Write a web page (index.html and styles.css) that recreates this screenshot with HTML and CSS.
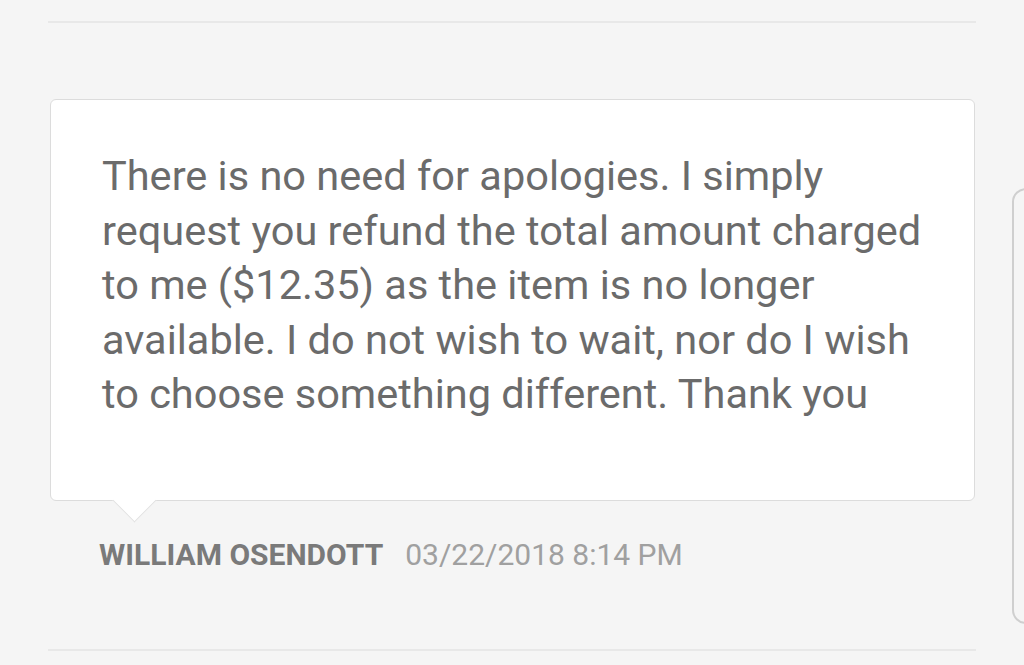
FILE: index.html
```html
<!DOCTYPE html>
<html>
<head>
<meta charset="utf-8">
<link rel="stylesheet" href="styles.css">
</head>
<body>
<div class="page">
  <div class="thread">
    <hr class="divider top">
    <div class="message">
      <div class="bubble">
        <p class="text">There is no need for apologies. I simply request you refund the total amount charged to me ($12.35) as the item is no longer available. I do not wish to wait, nor do I wish to choose something different. Thank you</p>
        <span class="tail"></span>
      </div>
      <div class="meta">
        <span class="author">WILLIAM OSENDOTT</span>
        <span class="date">03/22/2018 8:14 PM</span>
      </div>
    </div>
    <hr class="divider bottom">
  </div>
  <div class="side-panel"></div>
</div>
</body>
</html>
```

FILE: styles.css
```css
html, body {
  margin: 0;
  padding: 0;
  background: #f5f5f5;
  width: 1024px;
  height: 665px;
  overflow: hidden;
  font-family: Roboto, "Noto Sans", sans-serif;
}

.page {
  position: relative;
  display: flex;
  height: 665px;
}

.thread {
  width: 928px;
  margin-left: 48px;
  display: flex;
  flex-direction: column;
}

.divider {
  border: none;
  height: 2px;
  background: #e8e8e8;
  margin: 0;
}

.divider.top {
  margin-top: 21px;
}

.message {
  padding: 0 1px 0 2px;
  margin-top: 76px;
}

.bubble {
  position: relative;
  background: #fff;
  border: 1.5px solid #dcdcdc;
  border-radius: 6px;
  padding: 49px 30px 80px 51px;
  height: 271px;
}

.text {
  margin: 0;
  font-size: 41.5px;
  line-height: 54.5px;
  color: #6b6b6b;
}

.tail {
  position: absolute;
  left: 68px;
  bottom: -16px;
  width: 30px;
  height: 30px;
  background: #fff;
  border-right: 1.5px solid #e2e2e2;
  border-bottom: 1.5px solid #e2e2e2;
  transform: rotate(45deg);
}

.meta {
  margin-top: 36px;
  padding-left: 49px;
  display: flex;
  align-items: baseline;
  gap: 22px;
  font-size: 30px;
  line-height: 36px;
}

.author {
  font-weight: 700;
  color: #7a7a7a;
}

.date {
  color: #a0a0a0;
}

.divider.bottom {
  margin-top: 76px;
}

.side-panel {
  position: absolute;
  left: 1012px;
  top: 188px;
  width: 40px;
  height: 432px;
  border: 2px solid #cfcfcf;
  border-radius: 14px;
  background: #f5f5f5;
}
```
